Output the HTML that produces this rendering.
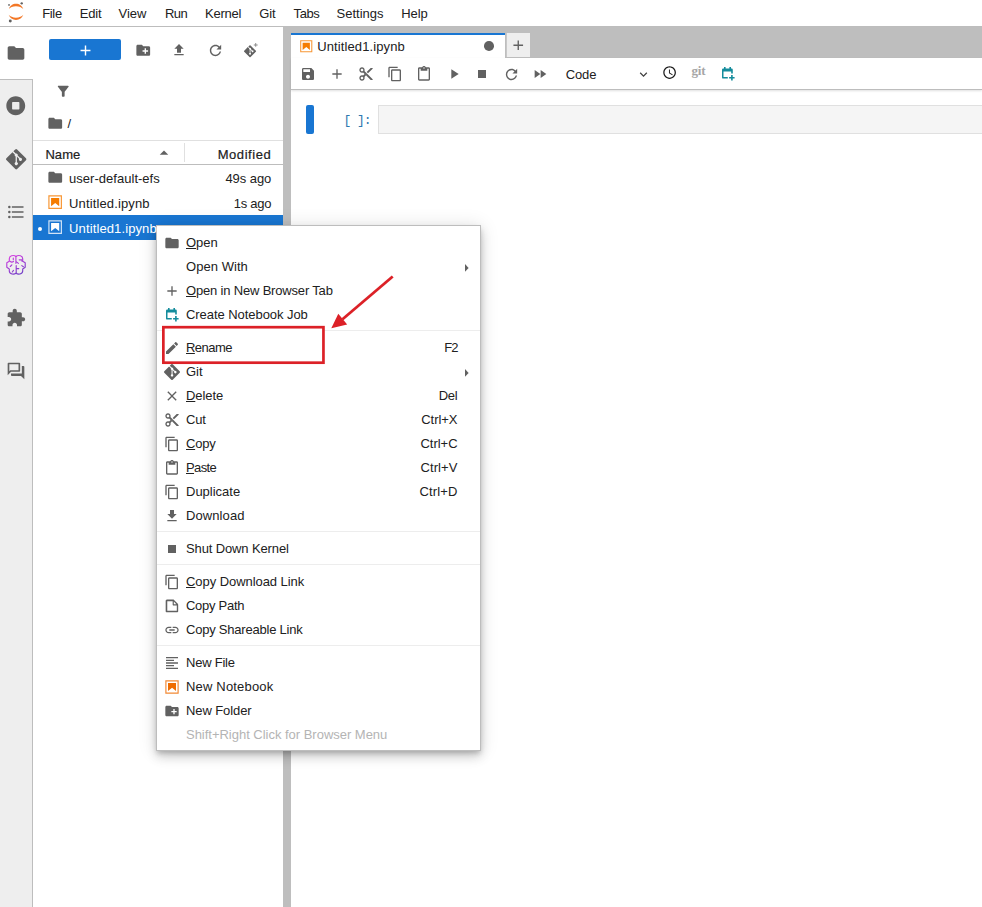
<!DOCTYPE html>
<html>
<head>
<meta charset="utf-8">
<title>JupyterLab</title>
<style>
*{box-sizing:border-box;margin:0;padding:0}
html,body{width:982px;height:907px;overflow:hidden;background:#fff}
body{font-family:"Liberation Sans",sans-serif;font-size:13px;color:#212121;position:relative}
.abs{position:absolute}
#menubar{left:0;top:0;width:982px;height:27px;background:#fff;border-bottom:1px solid #bdbdbd}
#leftbar{left:0;top:79px;width:33px;height:828px;background:#eeeeee;border-right:1px solid #bdbdbd;border-top:1px solid #bdbdbd}
#split{left:283px;top:27px;width:8px;height:880px;background:#bebebe}
#topgap{left:283px;top:27px;width:699px;height:6px;background:#bebebe}
#tabbar{left:291px;top:33px;width:691px;height:25px;background:#bebebe}
#tab{left:291px;top:33px;width:214px;height:25px;background:#fff;border-top:2px solid #1976d2}
#plus{left:505.500px;top:33px;width:24.800px;height:24.400px;background:#eeeeee;box-shadow:inset 1px 0 0 #c8c8c8}
#toolbar{left:291px;top:58px;width:691px;height:32px;background:#fff;border-bottom:1px solid #bdbdbd;box-shadow:0 1px 2px rgba(0,0,0,.12)}
#newbtn{left:49px;top:39px;width:72px;height:21px;background:#1976d2;border-radius:2px}
#fbhead{left:33px;top:140px;width:250px;height:25px;border-top:1px solid #e0e0e0;border-bottom:1px solid #bdbdbd}
#coldiv{left:184px;top:143px;width:1px;height:19px;background:#e0e0e0}
#sel{left:33px;top:215px;width:250px;height:25px;background:#1976d2}
#collapser{left:306px;top:105px;width:8px;height:29px;background:#1976d2;border-radius:2px}
#input{left:378px;top:105px;width:620px;height:29px;background:#f5f5f5;border:1px solid #e0e0e0}
.txt{position:absolute;white-space:nowrap;line-height:16px}
.txt u{text-decoration:underline;text-underline-offset:1px;text-decoration-thickness:1px}
svg{position:absolute;overflow:visible}
#menu{left:156px;top:225px;width:325px;height:526px;background:#fff;border:1px solid #bdbdbd;box-shadow:0 6px 10px 0 rgba(0,0,0,.14),0 1px 18px 0 rgba(0,0,0,.12),0 3px 5px -1px rgba(0,0,0,.2)}
.sep{position:absolute;left:157px;width:323px;height:1px;background:#ededed}
</style>
</head>
<body>
<div id="menubar" class="abs"></div>
<div id="leftbar" class="abs"></div>
<div id="split" class="abs"></div>
<div id="topgap" class="abs"></div>
<div id="tabbar" class="abs"></div>
<div id="tab" class="abs"></div>
<div id="plus" class="abs"></div>
<div id="toolbar" class="abs"></div>
<div id="newbtn" class="abs"></div>
<div id="fbhead" class="abs"></div>
<div id="coldiv" class="abs"></div>
<div id="sel" class="abs"></div>
<div id="collapser" class="abs"></div>
<div id="input" class="abs"></div>

<svg style="left:8.3px;top:2.1px" width="15.6" height="20.4" viewBox="0 0 39 51">
<path fill="#F37726" d="M20 39.100C12.150 39.100 5.300 36.240 1.740 31.980 3.060 35.800 5.540 39.110 8.810 41.450 12.080 43.790 16 45.050 20 45.050s7.920-1.260 11.200-3.600c3.270-2.340 5.740-5.650 7.070-9.470C34.700 36.240 27.850 39.100 20 39.100z"/>
<path fill="#F37726" d="M20 10.420c7.850 0 14.700 2.880 18.270 7.130-1.330-3.820-3.800-7.130-7.070-9.470C27.920 5.740 24 4.480 20 4.480s-7.920 1.260-11.200 3.600C5.530 10.420 3.060 13.730 1.740 17.550 5.300 13.300 12.150 10.420 20 10.420z"/>
<circle fill="#616161" cx="34.300" cy="3.300" r="2.950"/><circle fill="#616161" cx="5.700" cy="47.500" r="3.720"/><circle fill="#616161" cx="2.540" cy="7.260" r="2.180"/>
</svg>
<svg style="left:6px;top:42.7px" width="20" height="20" viewBox="0 0 24 24"><path fill="#616161" d="M10 4H4c-1.1 0-1.99.9-1.99 2L2 18c0 1.1.9 2 2 2h16c1.1 0 2-.9 2-2V8c0-1.1-.9-2-2-2h-8l-2-2z"/></svg>
<svg style="left:6.25px;top:96.25px" width="19.5" height="19.5" viewBox="0 0 512 512"><path fill="#616161" d="M256 8C119 8 8 119 8 256s111 248 248 248 248-111 248-248S393 8 256 8zm96 328c0 8.8-7.2 16-16 16H176c-8.8 0-16-7.2-16-16V176c0-8.8 7.2-16 16-16h160c8.8 0 16 7.2 16 16v160z"/></svg>
<svg style="left:5.8px;top:148.6px" width="20.4" height="20.4" viewBox="0 0 92 92"><path fill="#616161" d="M90.156 41.965 50.036 1.848a5.918 5.918 0 0 0-8.372 0l-8.328 8.332 10.566 10.566a7.030 7.030 0 0 1 7.230 1.684 7.034 7.034 0 0 1 1.669 7.277l10.187 10.184a7.028 7.028 0 0 1 7.278 1.672 7.040 7.040 0 0 1 0 9.957 7.050 7.050 0 0 1-9.965 0 7.044 7.044 0 0 1-1.528-7.660l-9.500-9.497V59.360a7.040 7.040 0 0 1 1.860 11.290 7.040 7.040 0 0 1-9.957 0 7.040 7.040 0 0 1 0-9.958 7.060 7.060 0 0 1 2.304-1.539V33.926a7.049 7.049 0 0 1-3.820-9.234L29.242 14.272 1.730 41.777a5.925 5.925 0 0 0 0 8.371L41.852 90.270a5.925 5.925 0 0 0 8.370 0l39.934-39.934a5.925 5.925 0 0 0 0-8.371"/></svg>
<svg style="left:6px;top:201.7px" width="20" height="20" viewBox="0 0 24 24"><path fill="#616161" d="M7,5H21V7H7V5M7,13V11H21V13H7M4,4.500A1.500,1.500 0 0,1 5.500,6A1.500,1.500 0 0,1 4,7.500A1.500,1.500 0 0,1 2.500,6A1.500,1.500 0 0,1 4,4.500M4,10.500A1.500,1.500 0 0,1 5.500,12A1.500,1.500 0 0,1 4,13.500A1.500,1.500 0 0,1 2.500,12A1.500,1.500 0 0,1 4,10.500M7,19V17H21V19H7M4,16.500A1.500,1.500 0 0,1 5.500,18A1.500,1.500 0 0,1 4,19.500A1.500,1.500 0 0,1 2.500,18A1.500,1.500 0 0,1 4,16.500Z"/></svg>
<svg style="left:6px;top:254.800px" width="20" height="20" viewBox="0 0 20 20" fill="none" stroke="url(#bg)" stroke-width="1.150" stroke-linecap="round" stroke-linejoin="round">
<linearGradient id="bg" gradientUnits="userSpaceOnUse" x1="4" y1="0" x2="14" y2="20"><stop offset="0" stop-color="#d93fe2"/><stop offset="1" stop-color="#6f3fc6"/></linearGradient>
<path d="M10 1.500C8.800 .4 7 .3 5.500 .8 4 1.300 3.300 2.300 3.300 3.800V6.200L.8 7.800V12.300L3.300 14V16C3.300 17.500 4.500 18.600 6 19 7.500 19.300 9 19 10 18.300"/>
<path d="M10 1.500C11.200 .4 13 .3 14.500 .8 16 1.300 16.700 2.300 16.700 3.800V6.200L19.200 7.800V12.300L16.700 14V16C16.700 17.500 15.500 18.600 14 19 12.500 19.300 11 19 10 18.300"/>
<path d="M9.900 1.500V8.300M9.900 6.400L12.400 8.400M10.200 10.500V18.300M10.200 13.550H12.800M7.300 3V4.800M4 6.300C5 7.100 6.500 7.200 7.500 6.600M13.200 4.800H15.800L16.100 6.300M4.300 11.500L5.900 9.800M15.800 10.600L17.400 11.700M6.300 17L7.500 15.400"/>
</svg>
<svg style="left:6px;top:308px" width="20" height="20" viewBox="0 0 24 24"><path fill="#616161" d="M20.500 11H19V7c0-1.100-.9-2-2-2h-4V3.500C13 2.120 11.880 1 10.500 1S8 2.120 8 3.500V5H4c-1.100 0-1.990.9-1.990 2v3.800H3.500c1.490 0 2.700 1.210 2.700 2.700s-1.210 2.700-2.700 2.700H2V20c0 1.100.9 2 2 2h3.800v-1.500c0-1.490 1.210-2.700 2.700-2.700 1.490 0 2.700 1.210 2.700 2.700V22H17c1.100 0 2-.9 2-2v-4h1.500c1.380 0 2.500-1.120 2.500-2.500S21.880 11 20.500 11z"/></svg>
<svg style="left:6px;top:361px" width="20" height="20" viewBox="0 0 24 24"><path fill="#616161" d="M15 4v7H5.170L4 12.170V4h11m1-2H3c-.55 0-1 .45-1 1v14l4-4h10c.55 0 1-.45 1-1V3c0-.55-.45-1-1-1zm5 4h-2v9H6v2c0 .55.45 1 1 1h11l4 4V7c0-.55-.45-1-1-1z"/></svg>
<svg style="left:76.5px;top:41.5px" width="17" height="17" viewBox="0 0 24 24"><path fill="#fff" d="M19 13h-6v6h-2v-6H5v-2h6V5h2v6h6v2z"/></svg>
<svg style="left:134.75px;top:41.75px" width="16.5" height="16.5" viewBox="0 0 24 24"><path fill="#616161" d="M20 6h-8l-2-2H4c-1.110 0-1.990.89-1.990 2L2 18c0 1.110.89 2 2 2h16c1.110 0 2-.89 2-2V8c0-1.110-.89-2-2-2zm-1 8h-3v3h-2v-3h-3v-2h3V9h2v3h3v2z"/></svg>
<svg style="left:171px;top:42px" width="16" height="16" viewBox="0 0 24 24"><path fill="#616161" d="M9 16h6v-6h4l-7-7-7 7h4zm-4 2h14v2H5z"/></svg>
<svg style="left:206.5px;top:41.5px" width="17" height="17" viewBox="0 0 18 18"><path fill="#616161" d="M9 13.500c-2.490 0-4.500-2.010-4.500-4.500S6.510 4.500 9 4.500c1.240 0 2.360.52 3.170 1.330L10 8h5V3l-1.760 1.760C12.150 3.680 10.660 3 9 3 5.690 3 3.010 5.690 3.010 9S5.690 15 9 15c2.970 0 5.430-2.160 5.900-5h-1.520c-.46 2-2.240 3.500-4.380 3.500z"/></svg>
<svg style="left:243.7px;top:43.1px" width="14.2" height="14.2" viewBox="0 0 92 92"><g transform="translate(0 14) scale(.85)"><path fill="#616161" d="M90.156 41.965 50.036 1.848a5.918 5.918 0 0 0-8.372 0l-8.328 8.332 10.566 10.566a7.030 7.030 0 0 1 7.230 1.684 7.034 7.034 0 0 1 1.669 7.277l10.187 10.184a7.028 7.028 0 0 1 7.278 1.672 7.040 7.040 0 0 1 0 9.957 7.050 7.050 0 0 1-9.965 0 7.044 7.044 0 0 1-1.528-7.660l-9.500-9.497V59.360a7.040 7.040 0 0 1 1.860 11.290 7.040 7.040 0 0 1-9.957 0 7.040 7.040 0 0 1 0-9.958 7.060 7.060 0 0 1 2.304-1.539V33.926a7.049 7.049 0 0 1-3.820-9.234L29.242 14.272 1.730 41.777a5.925 5.925 0 0 0 0 8.371L41.852 90.270a5.925 5.925 0 0 0 8.370 0l39.934-39.934a5.925 5.925 0 0 0 0-8.371"/></g><path fill="#616161" fill-opacity=".75" d="M79 0v9.500h9.500v6H79V25h-6v-9.500h-9.500v-6H73V0z"/></svg>
<svg style="left:54.75px;top:82.75px" width="16.5" height="16.5" viewBox="0 0 24 24"><path fill="#616161" d="M4.250 5.610C6.270 8.200 10 13 10 13v6c0 .55.45 1 1 1h2c.55 0 1-.45 1-1v-6s3.720-4.800 5.740-7.390A.998.998 0 0 0 18.950 4H5.040c-.83 0-1.300.95-.79 1.610z"/></svg>
<svg style="left:46.75px;top:114.75px" width="16.5" height="16.5" viewBox="0 0 24 24"><path fill="#616161" d="M10 4H4c-1.1 0-1.99.9-1.99 2L2 18c0 1.1.9 2 2 2h16c1.1 0 2-.9 2-2V8c0-1.1-.9-2-2-2h-8l-2-2z"/></svg>
<svg style="left:154px;top:143px" width="20" height="20" viewBox="0 0 18 18"><path fill="#616161" d="M5.200 10.500L9 6.800l3.800 3.700z"/></svg>
<svg style="left:46.75px;top:168.75px" width="16.5" height="16.5" viewBox="0 0 24 24"><path fill="#616161" d="M10 4H4c-1.1 0-1.99.9-1.99 2L2 18c0 1.1.9 2 2 2h16c1.1 0 2-.9 2-2V8c0-1.1-.9-2-2-2h-8l-2-2z"/></svg>
<svg style="left:46.85px;top:193.75px" width="16.3" height="16.3" viewBox="0 0 22 22"><path fill="#f57c00" fill-opacity=".8" d="M18.600 3.400v15.200H3.400V3.400h15.200m1.600-1.600H1.800v18.400h18.400V1.800z"/><path fill="#f57c00" d="M16.500 16.500l-5.400-4.300-5.600 4.300v-11h11z"/></svg>
<svg style="left:46.85px;top:218.85px" width="16.3" height="16.3" viewBox="0 0 22 22"><path fill="#fff" fill-opacity=".8" d="M18.600 3.400v15.200H3.400V3.400h15.200m1.600-1.600H1.800v18.400h18.400V1.800z"/><path fill="#fff" d="M16.500 16.500l-5.400-4.300-5.600 4.300v-11h11z"/></svg>
<div class="abs" style="left:37.600px;top:226.500px;width:4px;height:4px;border-radius:50%;background:#fff"></div>
<svg style="left:298.75px;top:38.85px" width="14.5" height="14.5" viewBox="0 0 22 22"><path fill="#f57c00" fill-opacity=".8" d="M18.600 3.400v15.200H3.400V3.400h15.200m1.600-1.600H1.800v18.400h18.400V1.800z"/><path fill="#f57c00" d="M16.500 16.500l-5.400-4.300-5.600 4.300v-11h11z"/></svg>
<div class="abs" style="left:484.100px;top:41.400px;width:9.700px;height:9.700px;border-radius:50%;background:#616161"></div>
<svg style="left:509.75px;top:37.05px" width="16.5" height="16.5" viewBox="0 0 24 24"><path fill="#616161" d="M19 13h-6v6h-2v-6H5v-2h6V5h2v6h6v2z"/></svg>
<svg style="left:300px;top:66px" width="16" height="16" viewBox="0 0 24 24"><path fill="#616161" d="M17 3H5c-1.110 0-2 .9-2 2v14c0 1.100.890 2 2 2h14c1.100 0 2-.9 2-2V7l-4-4zm-5 16c-1.660 0-3-1.340-3-3s1.340-3 3-3 3 1.340 3 3-1.340 3-3 3zm3-10H5V5h10v4z"/></svg>
<svg style="left:329px;top:66px" width="16" height="16" viewBox="0 0 24 24"><path fill="#616161" d="M19 13h-6v6h-2v-6H5v-2h6V5h2v6h6v2z"/></svg>
<svg style="left:357.6px;top:66px" width="16" height="16" viewBox="0 0 24 24"><path fill="#616161" d="M9.640 7.640c.23-.5.360-1.050.360-1.640 0-2.210-1.790-4-4-4S2 3.790 2 6s1.790 4 4 4c.59 0 1.140-.13 1.640-.360L10 12l-2.360 2.360C7.140 14.130 6.590 14 6 14c-2.210 0-4 1.790-4 4s1.790 4 4 4 4-1.790 4-4c0-.59-.13-1.140-.360-1.640L12 14l7 7h3v-1L9.640 7.640zM6 8c-1.100 0-2-.89-2-2s.9-2 2-2 2 .89 2 2-.9 2-2 2zm0 12c-1.100 0-2-.89-2-2s.9-2 2-2 2 .89 2 2-.9 2-2 2zm6-7.500c-.28 0-.5-.22-.5-.5s.22-.5.500-.5.500.22.500.5-.22.500-.5.500zM19 3l-6 6 2 2 7-7V3z"/></svg>
<svg style="left:387px;top:66px" width="16" height="16" viewBox="0 0 24 24"><path fill="#616161" d="M16 1H4c-1.100 0-2 .9-2 2v14h2V3h12V1zm3 4H8c-1.100 0-2 .9-2 2v14c0 1.100.9 2 2 2h11c1.100 0 2-.9 2-2V7c0-1.100-.9-2-2-2zm0 16H8V7h11v14z"/></svg>
<svg style="left:416px;top:66px" width="16" height="16" viewBox="0 0 24 24"><path fill="#616161" d="M19 2h-4.180C14.400.840 13.300 0 12 0c-1.300 0-2.400.840-2.820 2H5c-1.100 0-2 .9-2 2v16c0 1.100.9 2 2 2h14c1.100 0 2-.9 2-2V4c0-1.100-.9-2-2-2zm-7 0c.55 0 1 .45 1 1s-.45 1-1 1-1-.45-1-1 .45-1 1-1zm7 18H5V4h2v3h10V4h2v16z"/></svg>
<svg style="left:445.6px;top:66px" width="16" height="16" viewBox="0 0 24 24"><path fill="#616161" d="M8 5v14l11-7z"/></svg>
<svg style="left:474px;top:66px" width="16" height="16" viewBox="0 0 24 24"><path fill="#616161" d="M6 6h12v12H6z"/></svg>
<svg style="left:502.5px;top:65.5px" width="17" height="17" viewBox="0 0 18 18"><path fill="#616161" d="M9 13.500c-2.490 0-4.500-2.010-4.500-4.500S6.510 4.500 9 4.500c1.240 0 2.360.52 3.170 1.330L10 8h5V3l-1.760 1.760C12.150 3.680 10.660 3 9 3 5.690 3 3.010 5.690 3.010 9S5.690 15 9 15c2.970 0 5.430-2.160 5.900-5h-1.520c-.46 2-2.240 3.500-4.380 3.500z"/></svg>
<svg style="left:532px;top:66px" width="16" height="16" viewBox="0 0 24 24"><path fill="#616161" d="M4 18l8.500-6L4 6v12zm9-12v12l8.500-6L13 6z"/></svg>
<svg style="left:635.5px;top:66.5px" width="15" height="15" viewBox="0 0 24 24"><path fill="#424242" d="M7.410 8.590L12 13.170l4.590-4.580L18 10l-6 6-6-6z"/></svg>
<svg style="left:661.9px;top:64.6px" width="15.2" height="15.2" viewBox="0 0 24 24"><path fill="#1c1c1c" d="M11.990 2C6.470 2 2 6.480 2 12s4.470 10 9.990 10C17.520 22 22 17.520 22 12S17.520 2 11.990 2zM12 20c-4.420 0-8-3.580-8-8s3.580-8 8-8 8 3.580 8 8-3.580 8-8 8zm.5-13H11v6l5.250 3.150.75-1.230-4.500-2.670z"/></svg>
<svg style="left:721.9px;top:67px" width="13" height="14" viewBox="0 0 13 14"><path fill="#148c9c" d="M1.200 1.500H9.600a1.200 1.200 0 0 1 1.200 1.200V6.400H9.200V4.600H1.500V9.900H5.800V11.600H1.200A1.200 1.200 0 0 1 0 10.400V2.700A1.200 1.200 0 0 1 1.200 1.500zM2 0h1.600v2H2zM7.400 0h1.600v2H7.400zM9.100 8.100h1.600v1.800h1.900v1.700h-1.900v1.900H9.100v-1.900H7.100V9.900h2z"/></svg>
<div id="menu" class="abs"></div>
<div class="sep" style="top:330px"></div>
<div class="sep" style="top:531px"></div>
<div class="sep" style="top:564px"></div>
<div class="sep" style="top:645px"></div>
<svg style="left:160px;top:324px" width="168" height="42" viewBox="160 324 168 42"><rect x="163.35" y="327.2" width="160.1" height="35.5" fill="#fff" stroke="#dc2127" stroke-width="2.700"/></svg>
<svg style="left:164px;top:234.5px" width="16" height="16" viewBox="0 0 24 24"><path fill="#616161" d="M10 4H4c-1.1 0-1.99.9-1.99 2L2 18c0 1.1.9 2 2 2h16c1.1 0 2-.9 2-2V8c0-1.1-.9-2-2-2h-8l-2-2z"/></svg>
<svg style="left:464px;top:263px" width="6" height="10" viewBox="0 0 6 10"><path fill="#616161" d="M1 1.100L4.600 4.900 1 8.700z"/></svg>
<svg style="left:164px;top:282.5px" width="16" height="16" viewBox="0 0 24 24"><path fill="#616161" d="M19 13h-6v6h-2v-6H5v-2h6V5h2v6h6v2z"/></svg>
<svg style="left:166px;top:308.1px" width="13" height="14" viewBox="0 0 13 14"><path fill="#148c9c" d="M1.200 1.500H9.600a1.200 1.200 0 0 1 1.200 1.200V6.400H9.200V4.600H1.500V9.900H5.800V11.600H1.200A1.200 1.200 0 0 1 0 10.400V2.700A1.200 1.200 0 0 1 1.200 1.500zM2 0h1.600v2H2zM7.400 0h1.600v2H7.400zM9.100 8.100h1.600v1.800h1.900v1.700h-1.900v1.900H9.100v-1.900H7.100V9.900h2z"/></svg>
<svg style="left:164px;top:339.5px" width="16" height="16" viewBox="0 0 24 24"><path fill="#616161" d="M3 17.250V21h3.750L17.810 9.940l-3.750-3.750L3 17.250zM20.710 7.040c.39-.39.39-1.020 0-1.410l-2.340-2.340c-.39-.39-1.020-.39-1.410 0l-1.830 1.830 3.750 3.750 1.830-1.830z"/></svg>
<svg style="left:164px;top:363.5px" width="16" height="16" viewBox="0 0 92 92"><path fill="#616161" d="M90.156 41.965 50.036 1.848a5.918 5.918 0 0 0-8.372 0l-8.328 8.332 10.566 10.566a7.030 7.030 0 0 1 7.230 1.684 7.034 7.034 0 0 1 1.669 7.277l10.187 10.184a7.028 7.028 0 0 1 7.278 1.672 7.040 7.040 0 0 1 0 9.957 7.050 7.050 0 0 1-9.965 0 7.044 7.044 0 0 1-1.528-7.660l-9.500-9.497V59.360a7.040 7.040 0 0 1 1.860 11.290 7.040 7.040 0 0 1-9.957 0 7.040 7.040 0 0 1 0-9.958 7.060 7.060 0 0 1 2.304-1.539V33.926a7.049 7.049 0 0 1-3.820-9.234L29.242 14.272 1.730 41.777a5.925 5.925 0 0 0 0 8.371L41.852 90.270a5.925 5.925 0 0 0 8.370 0l39.934-39.934a5.925 5.925 0 0 0 0-8.371"/></svg>
<svg style="left:464px;top:368px" width="6" height="10" viewBox="0 0 6 10"><path fill="#616161" d="M1 1.100L4.600 4.900 1 8.700z"/></svg>
<svg style="left:164px;top:387.5px" width="16" height="16" viewBox="0 0 24 24"><path fill="#616161" d="M19 6.410L17.590 5 12 10.590 6.410 5 5 6.410 10.590 12 5 17.590 6.410 19 12 13.410 17.590 19 19 17.590 13.410 12z"/></svg>
<svg style="left:164px;top:411.5px" width="16" height="16" viewBox="0 0 24 24"><path fill="#616161" d="M9.640 7.640c.23-.5.360-1.050.360-1.640 0-2.210-1.790-4-4-4S2 3.790 2 6s1.790 4 4 4c.59 0 1.140-.13 1.640-.360L10 12l-2.360 2.360C7.140 14.130 6.590 14 6 14c-2.210 0-4 1.790-4 4s1.790 4 4 4 4-1.790 4-4c0-.59-.13-1.140-.360-1.640L12 14l7 7h3v-1L9.640 7.640zM6 8c-1.100 0-2-.89-2-2s.9-2 2-2 2 .89 2 2-.9 2-2 2zm0 12c-1.100 0-2-.89-2-2s.9-2 2-2 2 .89 2 2-.9 2-2 2zm6-7.500c-.28 0-.5-.22-.5-.5s.22-.5.500-.5.500.22.500.5-.22.500-.5.500zM19 3l-6 6 2 2 7-7V3z"/></svg>
<svg style="left:164px;top:435.5px" width="16" height="16" viewBox="0 0 24 24"><path fill="#616161" d="M16 1H4c-1.100 0-2 .9-2 2v14h2V3h12V1zm3 4H8c-1.100 0-2 .9-2 2v14c0 1.100.9 2 2 2h11c1.100 0 2-.9 2-2V7c0-1.100-.9-2-2-2zm0 16H8V7h11v14z"/></svg>
<svg style="left:164px;top:459.5px" width="16" height="16" viewBox="0 0 24 24"><path fill="#616161" d="M19 2h-4.180C14.400.840 13.300 0 12 0c-1.300 0-2.400.840-2.820 2H5c-1.100 0-2 .9-2 2v16c0 1.100.9 2 2 2h14c1.100 0 2-.9 2-2V4c0-1.100-.9-2-2-2zm-7 0c.55 0 1 .45 1 1s-.45 1-1 1-1-.45-1-1 .45-1 1-1zm7 18H5V4h2v3h10V4h2v16z"/></svg>
<svg style="left:164px;top:483.5px" width="16" height="16" viewBox="0 0 24 24"><path fill="#616161" d="M16 1H4c-1.100 0-2 .9-2 2v14h2V3h12V1zm3 4H8c-1.100 0-2 .9-2 2v14c0 1.100.9 2 2 2h11c1.100 0 2-.9 2-2V7c0-1.100-.9-2-2-2zm0 16H8V7h11v14z"/></svg>
<svg style="left:164px;top:507.5px" width="16" height="16" viewBox="0 0 24 24"><path fill="#616161" d="M19 9h-4V3H9v6H5l7 7 7-7zM5 18v2h14v-2H5z"/></svg>
<svg style="left:164px;top:540.5px" width="16" height="16" viewBox="0 0 24 24"><path fill="#616161" d="M6 6h12v12H6z"/></svg>
<svg style="left:164px;top:573.5px" width="16" height="16" viewBox="0 0 24 24"><path fill="#616161" d="M16 1H4c-1.100 0-2 .9-2 2v14h2V3h12V1zm3 4H8c-1.100 0-2 .9-2 2v14c0 1.100.9 2 2 2h11c1.100 0 2-.9 2-2V7c0-1.100-.9-2-2-2zm0 16H8V7h11v14z"/></svg>
<svg style="left:164px;top:597.5px" width="16" height="16" viewBox="0 0 22 22"><path fill="#616161" d="M19.300 8.200l-5.500-5.500c-.3-.3-.7-.5-1.200-.5H3.900c-.8.100-1.600.9-1.600 1.800v14.100c0 .9.700 1.600 1.600 1.600h14c.9 0 1.600-.7 1.600-1.600V9.400c.1-.5-.1-.9-.4-1.200zm-5.800-3.300l3.400 3.600h-3.400V4.900zm3.900 12.700H4.700c-.1 0-.2 0-.2-.2V4.700c0-.2.100-.3.200-.3h7.200v4.400s0 .8.300 1.100c.3.300 1.100.3 1.100.3h4.300v7.200s-.1.200-.2.200z"/></svg>
<svg style="left:164px;top:621.5px" width="16" height="16" viewBox="0 0 24 24"><path fill="#616161" d="M3.900 12c0-1.710 1.390-3.100 3.100-3.100h4V7H7c-2.760 0-5 2.240-5 5s2.240 5 5 5h4v-1.900H7c-1.710 0-3.100-1.390-3.100-3.100zM8 13h8v-2H8v2zm9-6h-4v1.900h4c1.710 0 3.100 1.390 3.100 3.100s-1.390 3.100-3.100 3.100h-4V17h4c2.760 0 5-2.240 5-5s-2.240-5-5-5z"/></svg>
<svg style="left:164px;top:654.5px" width="16" height="16" viewBox="0 0 24 24"><path fill="#616161" d="M15 15H3v2h12v-2zm0-8H3v2h12V7zM3 13h18v-2H3v2zm0 8h18v-2H3v2zM3 3v2h18V3H3z"/></svg>
<svg style="left:164px;top:678.5px" width="16" height="16" viewBox="0 0 22 22"><path fill="#ef6c00" fill-opacity=".8" d="M18.600 3.400v15.200H3.400V3.400h15.200m1.600-1.600H1.800v18.400h18.400V1.800z"/><path fill="#ef6c00" d="M16.500 16.500l-5.400-4.300-5.600 4.300v-11h11z"/></svg>
<svg style="left:164px;top:702.5px" width="16" height="16" viewBox="0 0 24 24"><path fill="#616161" d="M20 6h-8l-2-2H4c-1.110 0-1.990.89-1.990 2L2 18c0 1.110.89 2 2 2h16c1.110 0 2-.89 2-2V8c0-1.110-.89-2-2-2zm-1 8h-3v3h-2v-3h-3v-2h3V9h2v3h3v2z"/></svg>
<svg style="left:320px;top:270px" width="80" height="65" viewBox="320 270 80 65">
<line x1="392.700" y1="276.500" x2="342.500" y2="319.300" stroke="#dc2127" stroke-width="2.800"/>
<path fill="#dc2127" d="M331.300 328.200 L338.300 313.800 L347.200 324.600 Z"/>
</svg>
<div id="t0" class="txt" style="left:42.2px;top:5.90px;font-size:13px;color:#212121;font-family:'Liberation Sans',sans-serif;letter-spacing:-0.338px;">File</div>
<div id="t1" class="txt" style="left:79.8px;top:5.90px;font-size:13px;color:#212121;font-family:'Liberation Sans',sans-serif;letter-spacing:-0.227px;">Edit</div>
<div id="t2" class="txt" style="left:118.6px;top:5.90px;font-size:13px;color:#212121;font-family:'Liberation Sans',sans-serif;letter-spacing:-0.063px;">View</div>
<div id="t3" class="txt" style="left:165px;top:5.90px;font-size:13px;color:#212121;font-family:'Liberation Sans',sans-serif;letter-spacing:-0.520px;">Run</div>
<div id="t4" class="txt" style="left:205.1px;top:5.90px;font-size:13px;color:#212121;font-family:'Liberation Sans',sans-serif;letter-spacing:-0.246px;">Kernel</div>
<div id="t5" class="txt" style="left:259.3px;top:5.90px;font-size:13px;color:#212121;font-family:'Liberation Sans',sans-serif;letter-spacing:-0.208px;">Git</div>
<div id="t6" class="txt" style="left:293.6px;top:5.90px;font-size:13px;color:#212121;font-family:'Liberation Sans',sans-serif;letter-spacing:-0.467px;">Tabs</div>
<div id="t7" class="txt" style="left:336.6px;top:5.90px;font-size:13px;color:#212121;font-family:'Liberation Sans',sans-serif;letter-spacing:-0.011px;">Settings</div>
<div id="t8" class="txt" style="left:401.3px;top:5.90px;font-size:13px;color:#212121;font-family:'Liberation Sans',sans-serif;letter-spacing:-0.063px;">Help</div>
<div id="t9" class="txt" style="left:67.5px;top:115.90px;font-size:13px;color:#212121;font-family:'Liberation Sans',sans-serif;letter-spacing:1.775px;">/</div>
<div id="t10" class="txt" style="left:45.4px;top:146.90px;font-size:13px;color:#212121;font-family:'Liberation Sans',sans-serif;letter-spacing:0.078px;-webkit-text-stroke:0.2px #212121;">Name</div>
<div id="t11" class="txt" style="left:217.7px;top:146.90px;font-size:13px;color:#212121;font-family:'Liberation Sans',sans-serif;letter-spacing:0.557px;-webkit-text-stroke:0.2px #212121;">Modified</div>
<div id="t12" class="txt" style="left:69.1px;top:170.90px;font-size:13px;color:#212121;font-family:'Liberation Sans',sans-serif;letter-spacing:0.023px;">user-default-efs</div>
<div id="t13" class="txt" style="left:225.4px;top:170.90px;font-size:13px;color:#212121;font-family:'Liberation Sans',sans-serif;letter-spacing:-0.052px;">49s ago</div>
<div id="t14" class="txt" style="left:69.1px;top:195.90px;font-size:13px;color:#212121;font-family:'Liberation Sans',sans-serif;letter-spacing:0.123px;">Untitled.ipynb</div>
<div id="t15" class="txt" style="left:233.7px;top:195.90px;font-size:13px;color:#212121;font-family:'Liberation Sans',sans-serif;letter-spacing:-0.241px;">1s ago</div>
<div id="t16" class="txt" style="left:69.1px;top:220.90px;font-size:13px;color:#fff;font-family:'Liberation Sans',sans-serif;letter-spacing:0.113px;">Untitled1.ipynb</div>
<div id="t17" class="txt" style="left:317.2px;top:38.90px;font-size:13px;color:#212121;font-family:'Liberation Sans',sans-serif;letter-spacing:0.113px;">Untitled1.ipynb</div>
<div id="t18" class="txt" style="left:565.7px;top:66.50px;font-size:13px;color:#212121;font-family:'Liberation Sans',sans-serif;letter-spacing:-0.120px;">Code</div>
<div id="t19" class="txt" style="left:691.4px;top:63.01px;font-size:13px;color:#a6a6a6;font-family:'Liberation Serif',serif;letter-spacing:-0.184px;font-weight:bold;">git</div>
<div id="t20" class="txt" style="left:343.4px;top:112.84px;font-size:13px;color:#2f78b0;font-family:'Liberation Mono',monospace;letter-spacing:-0.980px;">[ ]:</div>
<div id="t21" class="txt" style="left:186px;top:234.90px;font-size:13px;color:#212121;font-family:'Liberation Sans',sans-serif;letter-spacing:-0.057px;"><u>O</u>pen</div>
<div id="t22" class="txt" style="left:186px;top:258.90px;font-size:13px;color:#212121;font-family:'Liberation Sans',sans-serif;letter-spacing:0.053px;">Open With</div>
<div id="t23" class="txt" style="left:186px;top:282.90px;font-size:13px;color:#212121;font-family:'Liberation Sans',sans-serif;letter-spacing:-0.178px;"><u>O</u>pen in New Browser Tab</div>
<div id="t24" class="txt" style="left:186px;top:306.90px;font-size:13px;color:#212121;font-family:'Liberation Sans',sans-serif;letter-spacing:-0.056px;">Create Notebook Job</div>
<div id="t25" class="txt" style="left:186px;top:339.90px;font-size:13px;color:#212121;font-family:'Liberation Sans',sans-serif;letter-spacing:-0.540px;"><u>R</u>ename</div>
<div id="t26" class="txt" style="left:444.3px;top:339.90px;font-size:13px;color:#212121;font-family:'Liberation Sans',sans-serif;letter-spacing:-0.986px;">F2</div>
<div id="t27" class="txt" style="left:186px;top:363.90px;font-size:13px;color:#212121;font-family:'Liberation Sans',sans-serif;letter-spacing:-0.008px;">Git</div>
<div id="t28" class="txt" style="left:186px;top:387.90px;font-size:13px;color:#212121;font-family:'Liberation Sans',sans-serif;letter-spacing:-0.082px;"><u>D</u>elete</div>
<div id="t29" class="txt" style="left:438.7px;top:387.90px;font-size:13px;color:#212121;font-family:'Liberation Sans',sans-serif;letter-spacing:-0.239px;">Del</div>
<div id="t30" class="txt" style="left:186px;top:411.90px;font-size:13px;color:#212121;font-family:'Liberation Sans',sans-serif;letter-spacing:-0.178px;">Cut</div>
<div id="t31" class="txt" style="left:421.2px;top:411.90px;font-size:13px;color:#212121;font-family:'Liberation Sans',sans-serif;letter-spacing:-0.031px;">Ctrl+X</div>
<div id="t32" class="txt" style="left:186px;top:435.90px;font-size:13px;color:#212121;font-family:'Liberation Sans',sans-serif;letter-spacing:-0.240px;"><u>C</u>opy</div>
<div id="t33" class="txt" style="left:420.5px;top:435.90px;font-size:13px;color:#212121;font-family:'Liberation Sans',sans-serif;letter-spacing:-0.034px;">Ctrl+C</div>
<div id="t34" class="txt" style="left:186px;top:459.90px;font-size:13px;color:#212121;font-family:'Liberation Sans',sans-serif;letter-spacing:-0.630px;"><u>P</u>aste</div>
<div id="t35" class="txt" style="left:420.5px;top:459.90px;font-size:13px;color:#212121;font-family:'Liberation Sans',sans-serif;letter-spacing:0.086px;">Ctrl+V</div>
<div id="t36" class="txt" style="left:186px;top:483.90px;font-size:13px;color:#212121;font-family:'Liberation Sans',sans-serif;letter-spacing:-0.000px;">Duplicate</div>
<div id="t37" class="txt" style="left:419.5px;top:483.90px;font-size:13px;color:#212121;font-family:'Liberation Sans',sans-serif;letter-spacing:0.133px;">Ctrl+D</div>
<div id="t38" class="txt" style="left:186px;top:507.90px;font-size:13px;color:#212121;font-family:'Liberation Sans',sans-serif;letter-spacing:0.096px;">Download</div>
<div id="t39" class="txt" style="left:186px;top:540.90px;font-size:13px;color:#212121;font-family:'Liberation Sans',sans-serif;letter-spacing:-0.124px;">Shut Down Kernel</div>
<div id="t40" class="txt" style="left:186px;top:573.90px;font-size:13px;color:#212121;font-family:'Liberation Sans',sans-serif;letter-spacing:-0.058px;"><u>C</u>opy Download Link</div>
<div id="t41" class="txt" style="left:186px;top:597.90px;font-size:13px;color:#212121;font-family:'Liberation Sans',sans-serif;letter-spacing:-0.278px;">Copy Path</div>
<div id="t42" class="txt" style="left:186px;top:621.90px;font-size:13px;color:#212121;font-family:'Liberation Sans',sans-serif;letter-spacing:-0.221px;">Copy Shareable Link</div>
<div id="t43" class="txt" style="left:186px;top:654.90px;font-size:13px;color:#212121;font-family:'Liberation Sans',sans-serif;letter-spacing:-0.235px;">New File</div>
<div id="t44" class="txt" style="left:186px;top:678.90px;font-size:13px;color:#212121;font-family:'Liberation Sans',sans-serif;letter-spacing:0.177px;">New Notebook</div>
<div id="t45" class="txt" style="left:186px;top:702.90px;font-size:13px;color:#212121;font-family:'Liberation Sans',sans-serif;letter-spacing:-0.087px;">New Folder</div>
<div id="t46" class="txt" style="left:186px;top:726.90px;font-size:13px;color:#b4b4b4;font-family:'Liberation Sans',sans-serif;letter-spacing:-0.019px;">Shift+Right Click for Browser Menu</div>
</body>
</html>
